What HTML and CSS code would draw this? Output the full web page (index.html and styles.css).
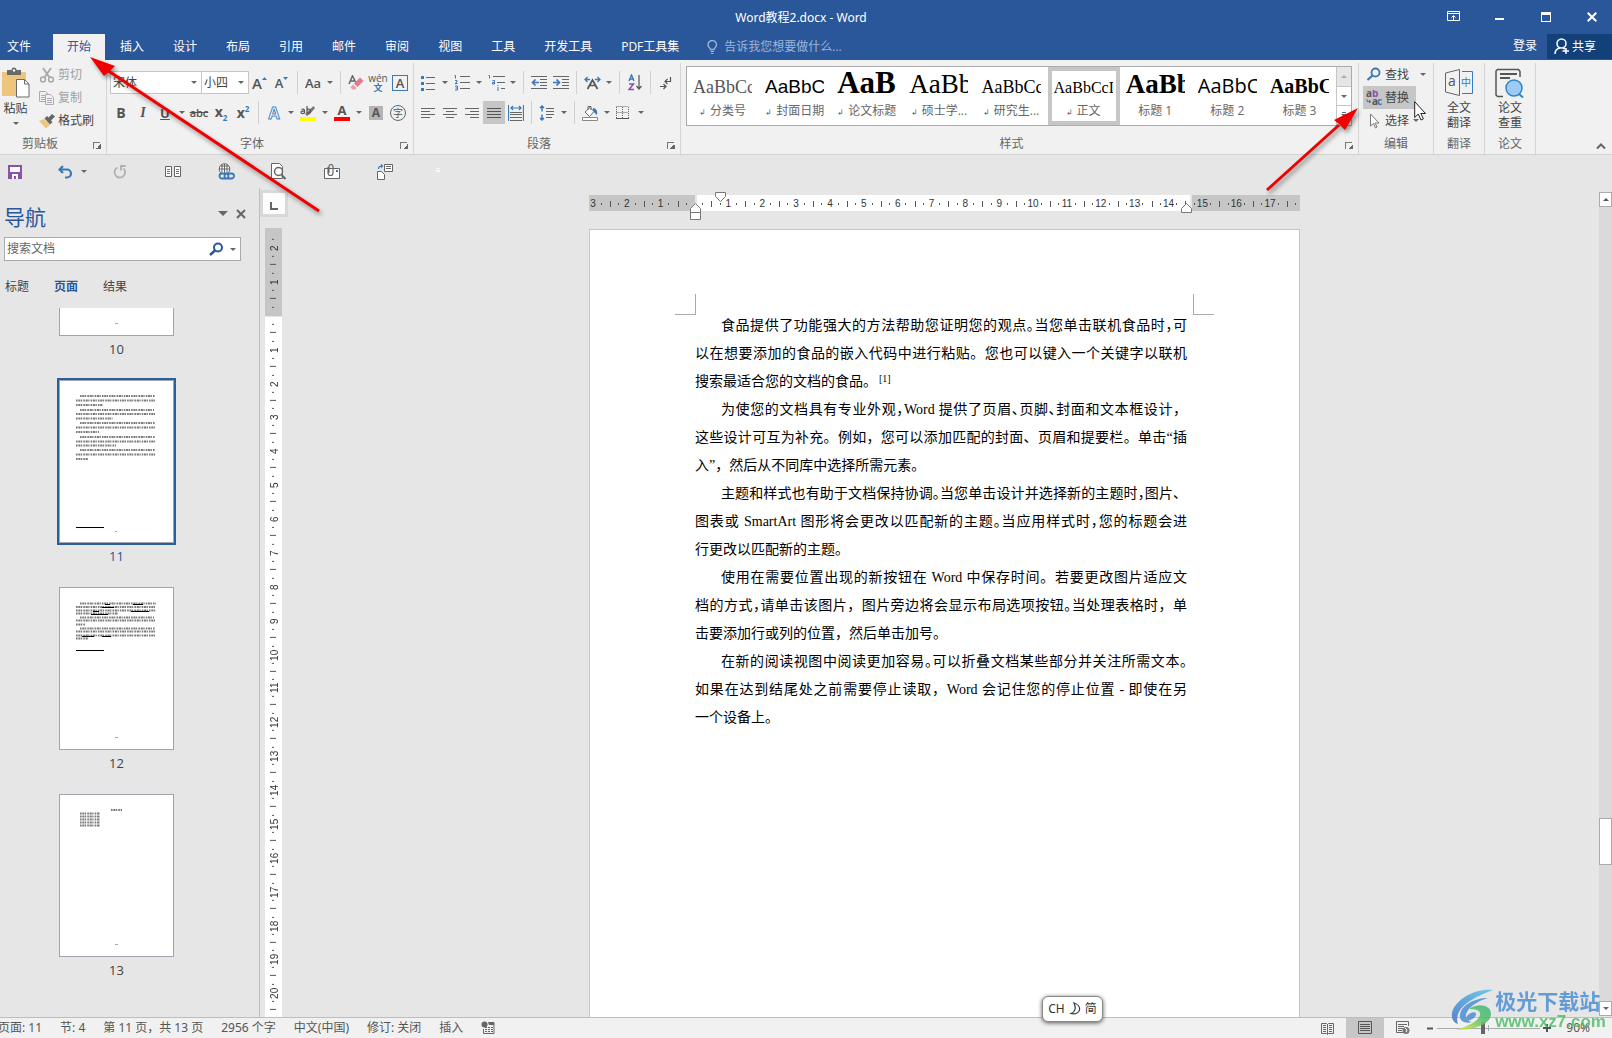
FILE: index.html
```html
<!DOCTYPE html>
<html lang="zh-CN">
<head>
<meta charset="utf-8">
<title>Word教程2.docx - Word</title>
<link rel="stylesheet" href="styles.css">
</head>
<body>
<header class="titlebar">
  <h1 class="doc-title">Word教程2.docx - Word</h1>
  <div class="window-buttons">
    <button aria-label="功能区显示选项"><svg width="14" height="11"><path d="M.5.5h12v9H.5zM.5 2.5h12M6.500 9V5M4.500 6.500l2-2 2 2" fill="none" stroke="#fff"/></svg></button>
    <button aria-label="最小化"><svg width="10" height="12"><path d="M0 7h9v2H0z" fill="#fff"/></svg></button>
    <button aria-label="最大化"><svg width="10" height="10"><path d="M0 0h10v10H0zM1 3v6h8V3z" fill="#fff" fill-rule="evenodd"/></svg></button>
    <button aria-label="关闭"><svg width="10" height="10"><path d="M.7.7l8.600 8.600M9.300.7L.7 9.300" stroke="#fff" stroke-width="2"/></svg></button>
  </div>
</header>
<nav class="tabs">
  <button class="tab tab-file">文件</button>
  <button class="tab active">开始</button>
  <button class="tab">插入</button>
  <button class="tab">设计</button>
  <button class="tab">布局</button>
  <button class="tab">引用</button>
  <button class="tab">邮件</button>
  <button class="tab">审阅</button>
  <button class="tab">视图</button>
  <button class="tab">工具</button>
  <button class="tab">开发工具</button>
  <button class="tab">PDF工具集</button>
  <button class="tell-me"><svg width="12" height="15"><path d="M3.500 9.500C3.500 8 1 7.500 1 4.800a4.200 4.200 0 0 1 8.500 0C9.500 7.500 7 8 7 9.500z" fill="none" stroke="#9fb6d8" stroke-width="1.400"/><path d="M3.500 11h3.500v1H3.500zM4 13h2.500v1H4z" fill="#9fb6d8"/></svg>告诉我您想要做什么...</button>
  <span class="grow"></span>
  <a class="sign-in" href="#">登录</a>
  <button class="share"><svg width="16" height="17"><circle cx="7.500" cy="5.500" r="4.500" fill="none" stroke="#fff" stroke-width="1.500"/><path d="M1 16c0-3 2-5.500 5-6M9 10l2 1M8.500 13h6.500M12 10v6" fill="none" stroke="#fff" stroke-width="1.500"/></svg>共享</button>
</nav>

<section class="ribbon" aria-label="功能区">
  <div class="group group-clip">
    <div class="content">
      <button class="big paste">
        <svg width="30" height="32"><path d="M1 5h24v24H1z" fill="#eec57c"/><path d="M6 3h4.500a2.500 2.500 0 0 1 5 0H20v5H6z" fill="#6a6a6a"/><circle cx="13" cy="3.500" r="1.200" fill="#fff"/><path d="M15.500 12.500h8l4.500 4.500v13H15.500z" fill="#fff" stroke="#6a6a6a"/><path d="M23.500 12.500V17H28" fill="none" stroke="#6a6a6a"/></svg>
        <span>粘贴</span><i class="caret"></i>
      </button>
      <div class="stack">
        <button class="cmd off"><svg width="16" height="16"><path d="M4 1l6.500 9.500M12 1L5.500 10.500" stroke="#a8a8a8" stroke-width="1.800"/><circle cx="4" cy="12.500" r="2.400" fill="none" stroke="#a8a8a8" stroke-width="1.500"/><circle cx="12" cy="12.500" r="2.400" fill="none" stroke="#a8a8a8" stroke-width="1.500"/></svg>剪切</button>
        <button class="cmd off"><svg width="16" height="16"><path d="M.5 1.500h6l3 3v7h-9zM2 5.500h4M2 7.500h4M2 9.500h4" fill="none" stroke="#b0a8b4"/><path d="M6.500 4.500h5l3 3v7h-8z" fill="#f1f1f1" stroke="#b0a8b4"/><path d="M8 8.500h5M8 10.500h5M8 12.500h5" stroke="#b0a8b4"/></svg>复制</button>
        <button class="cmd"><svg width="16" height="16"><path d="M0 8l5-2 6 6-4 3.500z" fill="#eec57c"/><path d="M5.500 5.500L8 3l1.500 1.500L13 1l3 2.500-4 4L13.500 9 11 11.500z" fill="#666"/></svg>格式刷</button>
      </div>
    </div>
    <div class="caption"><span>剪贴板</span><button class="launcher" aria-label="剪贴板设置"></button></div>
  </div>

  <div class="group group-font">
    <div class="content rows">
      <div class="row">
        <label class="combo combo-font"><select aria-label="字体"><option>宋体</option></select><i class="caret"></i></label><label class="combo combo-size"><select aria-label="字号"><option>小四</option></select><i class="caret"></i></label>
        <button class="ib" aria-label="增大字号"><span class="grow-a">A</span><svg width="6" height="14"><path d="M0 4l2.500-3L5 4z" fill="#3b78b8"/></svg></button>
        <button class="ib" aria-label="缩小字号"><span class="grow-a small">A</span><svg width="6" height="14"><path d="M0 1l2.500 3L5 1z" fill="#3b78b8"/></svg></button>
        <i class="sep"></i>
        <button class="ib dd" aria-label="更改大小写"><span class="glyph-aa">Aa</span><i class="caret"></i></button>
        <i class="sep"></i>
        <button class="ib" aria-label="清除格式"><svg width="16" height="16"><path d="M1 9L4.500.8 7.500 7M2.500 6h4" fill="none" stroke="#666" stroke-width="1.500"/><path d="M6 8.500l6-6 3.500 3.500-6 6z" fill="#e8788c"/><path d="M5 9.500l3.500 3.500-1.500 1.500H4.500l-2-2z" fill="#ee9aa8"/></svg></button>
        <button class="ib wen" aria-label="拼音指南"><span>wén</span><b>文</b></button>
        <button class="ib" aria-label="字符边框"><span class="boxed">A</span></button>
      </div>
      <div class="row">
        <button class="ib" aria-label="加粗"><b>B</b></button>
        <button class="ib" aria-label="倾斜"><span class="it">I</span></button>
        <button class="ib dd" aria-label="下划线"><span class="ul">U</span><i class="caret"></i></button>
        <button class="ib" aria-label="删除线"><s class="strike">abc</s></button>
        <button class="ib" aria-label="下标"><b>x<sub>2</sub></b></button>
        <button class="ib" aria-label="上标"><b>x<sup>2</sup></b></button>
        <i class="sep"></i>
        <button class="ib dd" aria-label="文本效果"><span class="effect">A</span><i class="caret"></i></button>
        <button class="ib dd" aria-label="突出显示"><svg width="16" height="16"><path d="M5 9l2 2 3-2 5-6-1.500-2z" fill="#777"/><path d="M0 12h16v4H0z" fill="#ff0"/><path d="M1.500 4.500c2-1 3 0 3 1V8c-2 1-3.500.5-3.500-.8s2-1.200 3.500-1M7 1v6.500c2 1 3.500 0 3.500-1.500S9 3.500 7 4.500" fill="none" stroke="#555" stroke-width="1.200"/></svg><i class="caret"></i></button>
        <button class="ib dd" aria-label="字体颜色"><span class="red-a">A</span><i class="caret"></i></button>
        <button class="ib" aria-label="字符底纹"><span class="shade">A</span></button>
        <button class="ib" aria-label="带圈字符"><span class="circled">字</span></button>
      </div>
    </div>
    <div class="caption"><span>字体</span><button class="launcher" aria-label="字体设置"></button></div>
  </div>

  <div class="group group-para">
    <div class="content rows">
      <div class="row">
        <button class="ib dd" aria-label="项目符号"><svg width="16" height="16"><path d="M6 2.500h9M6 8.500h9M6 14.500h9" stroke="#666"/><path d="M1 1h3v3H1zM1 7h3v3H1zM1 13h3v3H1z" fill="#3b78b8"/></svg><i class="caret"></i></button>
        <button class="ib dd" aria-label="编号"><svg width="16" height="17"><path d="M6 2.500h10M6 8.500h10M6 14.500h10" stroke="#666"/><path d="M.5 1.500h1V4.500M1 6.500h2v1.500l-2 1.500h2.500M1 12h2.500v4H1M1.500 14H3" fill="none" stroke="#3b78b8"/></svg><i class="caret"></i></button>
        <button class="ib dd" aria-label="多级列表"><svg width="17" height="17"><path d="M5 2.500h12M9 8.500h8M13 14.500h4" stroke="#666"/><path d="M.5 1.500h1V4.500M4.500 6.500h2V10h-2V8.500h2M10 11v1M10 13v4" fill="none" stroke="#3b78b8"/></svg><i class="caret"></i></button>
        <i class="sep"></i>
        <button class="ib" aria-label="减少缩进"><svg width="16" height="13"><path d="M0 .5h16M9 3.500h7M9 6.500h7M9 9.500h7M0 12.500h16" stroke="#666"/><path d="M8 6.500H2M4.500 3.500l-3 3 3 3" fill="none" stroke="#3b78b8" stroke-width="1.700"/></svg></button>
        <button class="ib" aria-label="增加缩进"><svg width="16" height="13"><path d="M0 .5h16M9 3.500h7M9 6.500h7M9 9.500h7M0 12.500h16" stroke="#666"/><path d="M0 6.500h6M3.500 3.500l3 3-3 3" fill="none" stroke="#3b78b8" stroke-width="1.700"/></svg></button>
        <i class="sep"></i>
        <button class="ib dd" aria-label="中文版式"><svg width="17" height="14"><path d="M3.500 13L8.500 4l5 9M5.500 9.500h6" fill="none" stroke="#555" stroke-width="1.700"/><path d="M6 3.500H1M3.500 1L1 3.500 3.500 6M11 3.500h5M13.500 1L16 3.500 13.500 6" fill="none" stroke="#3b78b8" stroke-width="1.300"/></svg><i class="caret"></i></button>
        <i class="sep"></i>
        <button class="ib" aria-label="排序"><svg width="15" height="17"><path d="M1 7l2.500-6L6 7M2 5h3" fill="none" stroke="#3b78b8" stroke-width="1.400"/><path d="M1 10h4.500L1 15.500h5" fill="none" stroke="#8a4fae" stroke-width="1.500"/><path d="M11 1v14M8.500 12l2.500 3 2.500-3" fill="none" stroke="#555" stroke-width="1.200"/></svg></button>
        <i class="sep"></i>
        <button class="ib" aria-label="显示编辑标记"><svg width="12" height="14"><path d="M10.500 1v4.500H5M7.500 3L5 5.500 7.500 8M0 10.500h6M3.500 8L6 10.500 3.500 13" fill="none" stroke="#555" stroke-width="1.200"/></svg></button>
      </div>
      <div class="row">
        <button class="ib" aria-label="左对齐"><svg width="14" height="12"><path d="M0 1.500h14M0 4.500h9M0 7.500h14M0 10.500h9" stroke="#666"/></svg></button>
        <button class="ib" aria-label="居中"><svg width="14" height="12"><path d="M0 1.500h14M3 4.500h8M0 7.500h14M3 10.500h8" stroke="#666"/></svg></button>
        <button class="ib" aria-label="右对齐"><svg width="14" height="12"><path d="M0 1.500h14M5 4.500h9M0 7.500h14M5 10.500h9" stroke="#666"/></svg></button>
        <button class="ib on" aria-label="两端对齐"><svg width="14" height="12"><path d="M0 1.500h14M0 4.500h14M0 7.500h14M0 10.500h14" stroke="#555"/></svg></button>
        <button class="ib" aria-label="分散对齐"><svg width="16" height="16"><path d="M.5 0v16M15.500 0v16M3 3h10M5 1L3 3l2 2M11 1l2 2-2 2" fill="none" stroke="#3b78b8" stroke-width="1.200"/><path d="M2 7.500h12M2 9.500h12M2 12.500h12M2 15.500h12" stroke="#666"/></svg></button>
        <i class="sep"></i>
        <button class="ib dd" aria-label="行距"><svg width="16" height="16"><path d="M3 1v5.500M1 3l2-2 2 2M3 9.500V15M1 13l2 2 2-2" fill="none" stroke="#3b78b8" stroke-width="1.500"/><path d="M7 3.500h8M7 6.500h8M7 9.500h8M7 12.500h6" stroke="#666"/></svg><i class="caret"></i></button>
        <i class="sep"></i>
        <button class="ib dd" aria-label="底纹"><svg width="17" height="16"><path d="M3 7l5-4.500 4 4-4.500 5z" fill="#fff" stroke="#666"/><path d="M6 5V1.500h3V5" fill="none" stroke="#666"/><path d="M11 3c3 0 5 3 4 7-2-1-2.500-3-4-4z" fill="#3b78b8"/><path d="M.5 12.500h15v3H.5z" fill="#fff" stroke="#888"/></svg><i class="caret"></i></button>
        <button class="ib dd" aria-label="边框"><svg width="14" height="14"><path d="M.5.500h12M.5 6.500h12M.5 1v12M6.500 1v12M12.500 1v12" fill="none" stroke="#666" stroke-dasharray="1 1"/><path d="M0 12.500h13" stroke="#555"/></svg><i class="caret"></i></button>
      </div>
    </div>
    <div class="caption"><span>段落</span><button class="launcher" aria-label="段落设置"></button></div>
  </div>

  <div class="group group-styles">
    <div class="content">
      <div class="gallery">
        <button class="style"><span class="sample s1">AaBbCc</span><span class="style-name"><i class="ret">↲</i>分类号</span></button>
        <button class="style"><span class="sample s2">AaBbCc</span><span class="style-name"><i class="ret">↲</i>封面日期</span></button>
        <button class="style"><span class="sample s3">AaBb</span><span class="style-name"><i class="ret">↲</i>论文标题</span></button>
        <button class="style"><span class="sample s4">AaBb</span><span class="style-name"><i class="ret">↲</i>硕士学...</span></button>
        <button class="style"><span class="sample s5">AaBbCc</span><span class="style-name"><i class="ret">↲</i>研究生...</span></button>
        <button class="style selected"><span class="sample s6">AaBbCcD</span><span class="style-name"><i class="ret">↲</i>正文</span></button>
        <button class="style"><span class="sample s7">AaBb</span><span class="style-name">标题 1</span></button>
        <button class="style"><span class="sample s8">AaBbC</span><span class="style-name">标题 2</span></button>
        <button class="style"><span class="sample s9">AaBbC</span><span class="style-name">标题 3</span></button>
        <div class="gallery-scroll">
          <button class="disabled" aria-label="上一行"><i class="caret up"></i></button>
          <button aria-label="下一行"><i class="caret"></i></button>
          <button aria-label="更多样式"><i class="more"></i></button>
        </div>
      </div>
    </div>
    <div class="caption"><span>样式</span><button class="launcher" aria-label="样式设置"></button></div>
  </div>

  <div class="group group-edit">
    <div class="content">
      <div class="stack">
        <button class="cmd"><svg width="16" height="16"><circle cx="9.500" cy="5.500" r="4" fill="none" stroke="#3b78b8" stroke-width="1.800"/><path d="M6.500 8.500L1.500 13" stroke="#3b78b8" stroke-width="2.200"/></svg>查找<i class="caret far"></i></button>
        <button class="cmd on"><svg width="16" height="16" class="ab-icon"><text x="0" y="7" fill="#555">a</text><text x="6" y="7" fill="#8a4fae">b</text><text x="6" y="15" fill="#555">a</text><text x="11" y="15" fill="#3b78b8">c</text><path d="M1 9v2.500h3M3 10l2 1.500L3 13" fill="none" stroke="#3b78b8"/></svg>替换</button>
        <button class="cmd"><svg width="16" height="16"><path d="M4.500 1v12l3-2.500 2 4.500 1.500-1-2-4h4z" fill="#fff" stroke="#777"/></svg>选择<i class="caret"></i></button>
      </div>
    </div>
    <div class="caption"><span>编辑</span></div>
  </div>

  <div class="group group-narrow">
    <div class="content">
      <button class="big">
        <svg width="28" height="30"><path d="M.5 5L14.500 1.500v26L.5 24z" fill="none" stroke="#666"/><path d="M17 3.500h10.500v22H17" fill="none" stroke="#3b78c8"/><text x="3" y="18" font-size="14" fill="#555">a</text><text x="16" y="18" font-size="10" fill="#3b78c8">中</text></svg>
        <span>全文<br>翻译</span>
      </button>
    </div>
    <div class="caption"><span>翻译</span></div>
  </div>
  <div class="group group-narrow">
    <div class="content">
      <button class="big">
        <svg width="30" height="30"><path d="M25 9V3.500L23.500 1.500H2.500L1 3v24l1.500 1.500H8" fill="none" stroke="#555" stroke-width="1.500"/><path d="M5 6h17M5 10h10" stroke="#555" stroke-width="1.800"/><circle cx="19" cy="20" r="8" fill="#9ccbf5" stroke="#2f86c0" stroke-width="1.500"/><path d="M24 26l4 3.500" stroke="#2f86c0" stroke-width="2"/></svg>
        <span>论文<br>查重</span>
      </button>
    </div>
    <div class="caption"><span>论文</span></div>
  </div>
  <div class="ribbon-end"><button aria-label="折叠功能区"><svg width="10" height="7"><path d="M1 5.500l4-4 4 4" fill="none" stroke="#666" stroke-width="2"/></svg></button></div>
</section>

<div class="qat">
  <button class="q q-save" aria-label="保存"><svg width="14" height="14"><path d="M0 0h14v14H0z" fill="#8a52a8"/><path d="M2 2h10v5H2zM4 9h6v5H8v-3H6v3H4z" fill="#fff"/></svg></button>
  <button class="q q-undo" aria-label="撤消"><svg width="16" height="14"><path d="M5 1L1.500 4.500 5 8M2 4.500h7a4 4 0 0 1 0 8H7" fill="none" stroke="#3b78b8" stroke-width="2.200"/></svg><i class="caret"></i></button>
  <button class="q" aria-label="重复"><svg width="14" height="14"><path d="M4.500 2.500a5.300 5.300 0 1 0 6 1" fill="none" stroke="#b0b0b0" stroke-width="1.800"/><path d="M8 0v5.500M7.500 1h5" fill="none" stroke="#b0b0b0" stroke-width="1.800"/></svg></button>
  <button class="q" aria-label="多页"><svg width="16" height="12"><path d="M.5.5h6v10h-6zM9.500.5h6v10h-6z" fill="#fff" stroke="#666"/><path d="M2 3.500h3M2 5.500h3M2 7.500h3M11 3.500h3M11 5.500h3M11 7.500h3" stroke="#777"/></svg></button>
  <button class="q" aria-label="超链接"><svg width="17" height="17"><circle cx="6.500" cy="6" r="5.300" fill="#fff" stroke="#666"/><path d="M1 6h11M6.500 1v10M2.500 3h8M4 1.500v8M9 1.500v8" fill="none" stroke="#666"/><path d="M3 10.500h5a2 2 0 0 1 0 5H4a2 2 0 0 1 0-5zM9 10.500h4.500a2 2 0 0 1 0 5H9a2 2 0 0 1 0-5z" fill="#e6e6e6" stroke="#3b78b8" stroke-width="1.800"/></svg></button>
  <button class="q" aria-label="打印预览"><svg width="16" height="17"><path d="M.5.500h8l3 3v12H.5z" fill="#fff" stroke="#666"/><circle cx="7.500" cy="8.500" r="4" fill="#fff" stroke="#666" stroke-width="1.500"/><path d="M10.500 12l4 4" stroke="#666" stroke-width="2.200"/></svg></button>
  <button class="q" aria-label="附件"><svg width="17" height="16"><path d="M.5 4.500h15v10H.5z" fill="#fff" stroke="#666"/><path d="M12 6h2v2h-2z" fill="#3b78b8"/><path d="M4 3v6a2.500 2.500 0 0 0 5 0V2.500a2 2 0 0 0-4 0V9" fill="none" stroke="#666" stroke-width="1.200"/></svg></button>
  <button class="q" aria-label="转换"><svg width="17" height="16"><path d="M7.500.5h8v7h-8zM9 2.500h5M9 4.500h5" fill="#fff" stroke="#666"/><path d="M.5 7.500h4l3 3v5h-7z" fill="#fff" stroke="#666"/><path d="M1.500 5c0-2 1-3 4-3M4 .5L5.500 2 4 3.500" fill="none" stroke="#3b78b8" stroke-width="1.200"/></svg></button>
  <button class="q" aria-label="自定义快速访问工具栏"><i class="more pale"></i></button>
</div>

<main class="workspace">
  <aside class="nav-pane">
    <div class="nav-head"><h2>导航</h2><button aria-label="选项"><i class="caret wide"></i></button><button aria-label="关闭"><svg width="10" height="10"><path d="M1 1l8 8M9 1L1 9" stroke="#666" stroke-width="2"/></svg></button></div>
    <div class="search"><input type="text" placeholder="搜索文档" aria-label="搜索文档"><button aria-label="搜索"><svg width="15" height="14"><circle cx="9" cy="5.500" r="4" fill="none" stroke="#2a579a" stroke-width="2"/><path d="M6 8.500L1 13" stroke="#2a579a" stroke-width="2.500"/></svg></button><i class="caret"></i></div>
    <div class="nav-tabs"><button>标题</button><button class="current">页面</button><button>结果</button></div>
    <ol class="thumbs">
      <li><div class="thumb cut"><svg viewBox="0 0 113 27"><path d="M55 15.500h3" stroke="#aaa"/></svg></div><span>10</span></li>
      <li class="current"><div class="thumb"><svg viewBox="0 0 113 161">
        <g class="lines"><path d="M20 15h75M16 19.500h79M16 24h27M20 29h74M16 33h79M16 37.500h37M20 42h75M16 46.500h79M16 51h23M20 56h75M16 60.500h79M16 64.500h40M20 69h75M16 73.500h79M16 78h12"/></g><path d="M16 146.500h28" stroke="#000"/><path d="M55 150.500h2" stroke="#aaa"/></svg></div><span>11</span></li>
      <li><div class="thumb"><svg viewBox="0 0 113 161">
        <g class="lines"><path d="M20 15.500h76M16 19h79M16 22.500h80M16 25.500h42M20 29.500h74M16 32.500h79M16 36.500h9M20 40.500h75M16 43.500h79M16 47.500h79M16 50.500h12"/></g><path d="M45 16.500h5M73 16.500h10M42 19.500h12M33 23.500h6M71 23.500h18M31 26.500h17M22 48.500h12M42 48.500h9M16 62.500h28" stroke="#000"/><path d="M55 149.500h3" stroke="#aaa"/></svg></div><span>12</span></li>
      <li><div class="thumb"><svg viewBox="0 0 113 161">
        <g class="lines"><path d="M51 15h11M20 18.500h20M20 21.500h20M20 24.500h20M20 27.500h20M20 30.500h20"/></g><path d="M55 149.500h3" stroke="#aaa"/></svg></div><span>13</span></li>
    </ol>
  </aside>

  <div class="v-ruler-col">
    <button class="tab-stop" aria-label="制表符"><i></i></button>
    <div class="v-ruler"><div class="v-track"><i>2</i><i>1</i><i></i><i>1</i><i>2</i><i>3</i><i>4</i><i>5</i><i>6</i><i>7</i><i>8</i><i>9</i><i>10</i><i>11</i><i>12</i><i>13</i><i>14</i><i>15</i><i>16</i><i>17</i><i>18</i><i>19</i><i>20</i><i></i></div></div>
  </div>

  <div class="canvas">
    <div class="sheet-col">
      <div class="h-ruler">
        <div class="h-clip"><div class="h-track"><i>3</i><i>2</i><i>1</i><i></i><i>1</i><i>2</i><i>3</i><i>4</i><i>5</i><i>6</i><i>7</i><i>8</i><i>9</i><i>10</i><i>11</i><i>12</i><i>13</i><i>14</i><i>15</i><i>16</i><i>17</i><i></i></div></div>
        <svg class="marker first" width="11" height="11"><path d="M.5.500h10v4l-5 5-5-5z" fill="#fff" stroke="#777"/></svg>
        <svg class="marker hang" width="11" height="17"><path d="M.5 16.500v-11l5-5 5 5v11zM.5 9.500h10" fill="#fff" stroke="#777"/></svg>
        <svg class="marker right" width="11" height="11"><path d="M.5 9.500v-4l5-5 5 5v4z" fill="#fff" stroke="#777"/></svg>
      </div>
      <article class="page">
        <div class="crop-row"><i class="crop-left"></i><i class="crop-right"></i></div>
        <div class="body-text">
          <p><span class="ln">食品提供了功能强大的方法帮助您证明您的观点<span class="tight">。</span>当您单击联机食品时<span class="tight">，</span>可</span><span class="ln">以在想要添加的食品的嵌入代码中进行粘贴。您也可以键入一个关键字以联机</span><span class="end">搜索最适合您的文档的食品。<sup>[1]</sup></span></p>
          <p><span class="ln">为使您的文档具有专业外观<span class="tight">，</span>Word 提供了页眉<span class="tight">、</span>页脚<span class="tight">、</span>封面和文本框设计，</span><span class="ln">这些设计可互为补充。例如，您可以添加匹配的封面、页眉和提要栏。单击“插</span><span class="end">入”，然后从不同库中选择所需元素。</span></p>
          <p><span class="ln">主题和样式也有助于文档保持协调<span class="tight">。</span>当您单击设计并选择新的主题时<span class="tight">，</span>图片、</span><span class="ln">图表或 SmartArt 图形将会更改以匹配新的主题<span class="tight">。</span>当应用样式时<span class="tight">，</span>您的标题会进</span><span class="end">行更改以匹配新的主题。</span></p>
          <p><span class="ln">使用在需要位置出现的新按钮在 Word 中保存时间。若要更改图片适应文</span><span class="ln">档的方式<span class="tight">，</span>请单击该图片，图片旁边将会显示布局选项按钮<span class="tight">。</span>当处理表格时，单</span><span class="end">击要添加行或列的位置，然后单击加号。</span></p>
          <p><span class="ln">在新的阅读视图中阅读更加容易<span class="tight">。</span>可以折叠文档某些部分并关注所需文本<span class="tight">。</span></span><span class="ln">如果在达到结尾处之前需要停止读取，Word 会记住您的停止位置 - 即使在另</span><span class="end">一个设备上。</span></p>
        </div>
      </article>
    </div>
  </div>

  <div class="scrollbar">
    <button aria-label="向上滚动"><i class="caret up"></i></button>
    <div class="rail"><div class="handle"></div></div>
    <button aria-label="向下滚动"><i class="caret"></i></button>
  </div>
</main>

<footer class="status">
  <span>页面: 11</span><span>节: 4</span><span>第 11 页，共 13 页</span><span>2956 个字</span><span>中文(中国)</span><span>修订: 关闭</span><span>插入</span>
  <svg width="14" height="14"><circle cx="3.500" cy="3.500" r="3" fill="#666"/><path d="M8 1.500h5v11H2.500V8" fill="none" stroke="#666"/><path d="M7 1h6v3H8z" fill="#666"/><path d="M4 6.500h8M4 8.500h8M4 10.500h8" stroke="#666" stroke-dasharray="2 1"/></svg>
  <span class="grow"></span>
  <div class="views">
    <button aria-label="阅读视图"><svg width="13" height="13"><path d="M.5 1.500h5l1 1 1-1h5v10h-5l-1 1-1-1h-5zM6.500 2v10M2 3.500h3M2 5.500h3M2 7.500h3M2 9.500h3M8 3.500h3M8 5.500h3M8 7.500h3M8 9.500h3" fill="none" stroke="#666"/></svg></button>
    <button class="on" aria-label="页面视图"><svg width="14" height="14"><path d="M.5.500h13v12H.5zM2 3.500h10M2 5.500h10M2 7.500h10M2 9.500h10" fill="none" stroke="#555"/></svg></button>
    <button aria-label="Web 版式"><svg width="14" height="14"><path d="M7 11.500H.5V.5h12V5M2 3.500h9M2 5.500h6M2 7.500h5M2 9.500h4" fill="none" stroke="#666"/><circle cx="10" cy="9.500" r="3.500" fill="#777"/><path d="M9 7l2 2-1 2" fill="none" stroke="#fff"/></svg></button>
  </div>
  <div class="zoom">
    <button aria-label="缩小"><svg width="7" height="7"><path d="M0 3.500h6" stroke="#555" stroke-width="2"/></svg></button>
    <input type="range" min="10" max="200" value="93" aria-label="缩放比例">
    <button aria-label="放大"><svg width="8" height="8"><path d="M0 4h8M4 0v8" stroke="#555" stroke-width="2"/></svg></button>
    <span class="pct">90%</span>
  </div>
</footer>

<div class="ime">CH<svg width="12" height="14"><path d="M5 1c4 1 6 4 5.500 7S6 12.500 2 11.500C6 10 7.500 6 5 1z" fill="none" stroke="#333" stroke-width="1.200"/></svg>简</div>

<div class="watermark">
  <svg width="44" height="42"><defs><linearGradient id="wa" x1="0" y1="1" x2="1" y2="0"><stop offset="0" stop-color="#3f74c4"/><stop offset="1" stop-color="#59c6ee"/></linearGradient><linearGradient id="wb" x1="0" y1="1" x2="1" y2="0"><stop offset="0" stop-color="#e6ea3a"/><stop offset=".6" stop-color="#52bd6c"/><stop offset="1" stop-color="#3fb57c"/></linearGradient></defs>
  <path d="M42 1C25-1 4 10 1 24c-1 6 2 10 6 11-3-8 2-17 12-23C27 7 34 4 42 1z" fill="url(#wa)"/><path d="M37 9C22 9 10 17 9 26c-1 7 6 9 12 7-5-1-8-5-5-10 3-6 11-11 21-14z" fill="#4d8fd4"/><path d="M18 20c8-6 22-5 22 5 0 9-14 16-35 16 12-4 23-9 24-15 1-5-5-6-11-6z" fill="url(#wb)"/><path d="M16 27c3-4 9-5 9-2 0 4-6 7-11 7z" fill="#4d8fd4"/></svg>
  <div><strong>极光下载站</strong><span>www.xz7.com</span></div>
</div>

<svg class="callout callout-left" width="340" height="230"><g fill="#f00000"><path d="M319 211L107 70" stroke="#f00000" stroke-width="3"/><path d="M90 57l25 9-5 5-6 5z"/></g></svg>
<svg class="callout callout-right" width="180" height="120"><path d="M15 110L87 45" stroke="#f00000" stroke-width="3"/><path d="M106 28L93 50l-6-6-5-4z" fill="#f00000"/></svg>
<svg class="pointer" width="14" height="20"><path d="M.7.700v15.800l3.500-3.500 2.800 6 2.400-1.200-2.600-5.300h4.700z" fill="#fff" stroke="#222"/></svg>
</body>
</html>
```
FILE: styles.css
```css
* { box-sizing: border-box; }

body {
  margin: 0;
  height: 100vh;
  min-height: 640px;
  display: flex;
  flex-direction: column;
  overflow: hidden;
  position: relative;
  background: #e6e6e6;
  color: #444;
  font: 12px/16px "Open Sans", "Noto Sans CJK SC", sans-serif;
}

button, input, select {
  font: inherit;
  color: inherit;
  border: 0;
  padding: 0;
  margin: 0;
  background: none;
  border-radius: 0;
}

svg { display: block; flex: none; }
i { font-style: normal; }
.grow { flex: 1; }

.caret {
  flex: none;
  border: 3px solid transparent;
  border-top-color: #666;
  border-bottom-width: 0;
}
.caret.up { border-top-width: 0; border-bottom: 3px solid #aaa; }
.caret.wide { border-width: 5px 5px 0; }

/* Title bar and tabs */
.titlebar { display: flex; height: 34px; background: #2a579a; color: #fff; flex: none; }
.doc-title { flex: 1; margin: 0; padding-left: 168px; font: 12px/35px "Noto Sans", "Noto Sans CJK SC", sans-serif; text-align: center; }
.window-buttons { display: flex; gap: 6px; }
.window-buttons button { width: 40px; height: 33px; display: flex; align-items: center; justify-content: center; }

.tabs { display: flex; gap: 1px; height: 26px; background: #2a579a; color: #fff; flex: none; }
.tab { padding: 0 14px; line-height: 22px; white-space: nowrap; }
.tab-file { padding: 0 21px 0 7px; }
.tab.active { background: #f1f1f1; color: #2a579a; }
.tell-me { display: flex; align-items: center; gap: 5px; margin-left: 13px; color: #9fb6d8; }
.sign-in { color: #fff; text-decoration: none; line-height: 24px; margin-right: 9px; }
.share { display: flex; align-items: center; gap: 2px; width: 65px; height: 25px; padding-left: 7px; background: #124078; }

/* Ribbon */
.ribbon { display: flex; height: 95px; padding-top: 3px; background: #f1f1f1; border-bottom: 1px solid #d2d2d2; flex: none; }
.group { display: flex; flex-direction: column; border-right: 1px solid #d4d4d4; flex: none; }
.content { display: flex; height: 70px; flex: none; }
.caption { display: flex; align-items: center; height: 21px; color: #666; }
.caption span { flex: 1; text-align: center; }
.launcher { width: 16px; height: 10px; background: linear-gradient(#777, #777) 3px 3px / 7px 1px no-repeat, linear-gradient(#777, #777) 3px 3px / 1px 7px no-repeat, linear-gradient(135deg, transparent 50%, #666 50%) 6px 5px / 5px 5px no-repeat; }

.group-clip { width: 107px; }
.group-clip .caption span { padding-right: 10px; }
.group-font { width: 307px; }
.group-para { width: 267px; }
.group-styles { flex: 1; min-width: 400px; }
.group-edit { width: 75px; }
.group-narrow { width: 51px; }
.ribbon-end { width: 76px; display: flex; align-items: flex-end; justify-content: flex-end; padding: 0 6px 4px 0; flex: none; }

.big { display: flex; flex-direction: column; align-items: center; width: 50px; padding-top: 5px; line-height: 15px; }
.big svg { margin-bottom: 2px; }
.paste { width: 37px; padding: 4px 6px 0 0; }
.paste .caret { margin-top: 6px; }
.stack { display: flex; flex-direction: column; align-items: flex-start; }
.cmd { display: flex; align-items: center; gap: 3px; height: 23px; padding: 0 2px; white-space: nowrap; }
.cmd.off { color: #a0a0a0; }
.on { background: #c6c6c6; }
.group-edit .content { padding-left: 4px; }
.group-edit .cmd { padding-left: 3px; }
.group-edit .cmd.on { padding-right: 7px; }
.group-edit .cmd .caret { margin-left: 1px; }
.group-edit .cmd .far { margin-left: 8px; }
.ab-icon { font: bold 10px "Open Sans", sans-serif; }

.rows { flex-direction: column; padding: 8px 0 0 3px; gap: 7px; }
.row { display: flex; height: 23px; }
.sep { width: 1px; margin: 0 4px; background: #d0d0d0; }
.ib { display: flex; align-items: center; justify-content: center; width: 22px; height: 23px; color: #555; line-height: 16px; font-size: 14px; }
.ib.dd { width: 34px; justify-content: flex-start; padding-left: 3px; gap: 3px; }
.ib.dd > :first-child { min-width: 16px; }
.ib.dd .caret { margin-left: auto; margin-right: 3px; }
.ib.on { color: #444; }

.combo { display: flex; align-items: center; height: 23px; border: 1px solid #c6c6c6; background: #fff; padding: 0 4px 0 2px; }
.combo + .combo { border-left: 0; }
.combo select { flex: 1; min-width: 0; appearance: none; outline: 0; }
.combo-font { width: 92px; }
.combo-size { width: 47px; }

.grow-a { font-size: 15px; font-weight: 600; }
.grow-a.small { font-size: 13px; }
.glyph-aa { font-weight: 600; font-size: 13px; }
.wen { flex-direction: column; font-size: 10px; line-height: 10px; }
.wen b { color: #3b78b8; font-size: 9px; }
.boxed { width: 16px; height: 16px; border: 1px solid #3b78b8; text-align: center; line-height: 14px; font-weight: 600; font-size: 13px; }
.it { font: italic bold 14px/16px "Liberation Serif", serif; text-align: center; }
.ul { text-decoration: underline; font-weight: 700; text-align: center; font-size: 13px; }
.strike { font-size: 11px; font-weight: 600; }
.ib sub, .ib sup { font-size: 8px; line-height: 8px; color: #3b78b8; }
.effect { color: #fff; font-weight: 700; font-size: 16px; text-align: center; -webkit-text-stroke: 1px #4a8ac6; }
.red-a { border-bottom: 4px solid #f00; font-weight: 700; font-size: 13px; line-height: 13px; text-align: center; }
.shade { width: 14px; height: 14px; background: #b4b4b4; line-height: 14px; text-align: center; font-weight: 700; font-size: 12px; }
.circled { width: 16px; height: 16px; border: 1px solid #666; border-radius: 50%; font-size: 10px; line-height: 14px; text-align: center; }

/* Style gallery */
.group-styles .content { padding: 3px 6px 7px 5px; }
.gallery { flex: 1; display: flex; border: 1px solid #ababab; background: #fff; min-width: 0; }
.style { flex: 1 1 0; min-width: 0; height: 58px; padding: 0 7px 0 6px; overflow: hidden; display: flex; flex-direction: column; text-align: left; }
.style.selected { border: 4px solid #c6c6c6; padding: 0 3px 0 2px; }
.style.selected .sample { margin-top: -4px; }
.sample { width: 100%; height: 35px; line-height: 1px; overflow: hidden; white-space: nowrap; color: #000; font-family: "Liberation Serif", serif; }
.sample::before { content: ""; display: inline-block; height: 26px; }
.style-name { align-self: center; line-height: 18px; white-space: nowrap; color: #666; }
.ret { font-size: 8px; margin-right: 4px; }
.s1 { font-size: 18px; color: #555; }
.s2 { font-size: 19px; font-family: "Liberation Sans", sans-serif; }
.s3 { font-size: 31px; font-weight: 700; }
.s4 { font-size: 27px; }
.s5 { font-size: 18px; }
.s6 { font-size: 16px; }
.s7 { font-size: 27px; font-weight: 700; }
.s8 { font-size: 20px; font-family: "Open Sans", sans-serif; }
.s9 { font-size: 20px; font-weight: 700; }
.gallery-scroll { width: 15px; display: flex; flex-direction: column; border-left: 1px solid #c6c6c6; }
.gallery-scroll button { flex: 1; display: flex; align-items: center; justify-content: center; border-top: 1px solid #c6c6c6; }
.gallery-scroll .disabled { background: #e6e6e6; border-top: 0; }
.more { border: 3px solid transparent; border-top-color: #666; border-bottom: 0; box-shadow: 0 -3px 0 -1px #666; }
.more.pale { border-top-color: #fafafa; box-shadow: 0 -3px 0 -1px #f4f4f4; }

/* Quick access toolbar */
.qat { display: flex; gap: 23px; height: 33px; flex: none; }
.q { width: 30px; display: flex; align-items: center; justify-content: center; }
.q-save { width: 29px; }
.q-undo { justify-content: flex-start; padding-left: 6px; gap: 7px; }

/* Workspace */
.workspace { flex: 1; display: flex; min-height: 0; }
.nav-pane { width: 260px; padding-top: 9px; border-right: 1px solid #bfbfbf; display: flex; flex-direction: column; flex: none; }
.nav-head { display: flex; align-items: center; height: 40px; padding: 0 13px 0 4px; gap: 8px; }
.nav-head h2 { flex: 1; margin: 0; font-size: 21px; line-height: 40px; font-weight: 400; color: #2a579a; }
.nav-head button { display: flex; align-items: center; height: 32px; margin-bottom: 7px; }
.search { display: flex; align-items: center; height: 24px; margin: 0 18px 0 4px; padding: 0 4px 0 2px; border: 1px solid #ababab; background: #fff; gap: 6px; }
.search input { flex: 1; min-width: 0; outline: 0; }
.search input::placeholder { color: #666; opacity: 1; }
.nav-tabs { display: flex; height: 52px; margin-bottom: -5px; }
.nav-tabs button { width: 49px; padding-left: 13px; text-align: left; line-height: 52px; }
.nav-tabs button:first-child { width: 41px; padding-left: 5px; }
.nav-tabs .current { color: #2a579a; font-weight: 700; }
.thumbs { list-style: none; margin: 0; padding: 0 0 0 59px; overflow: hidden; flex: 1; display: flex; flex-direction: column; gap: 22px; }
.thumbs li { width: 115px; flex: none; text-align: center; font-size: 13px; }
.thumbs span { display: block; margin-top: 4px; line-height: 18px; }
.thumb { height: 163px; border: 1px solid #a0a5ad; background: #fff; }
.thumb.cut { height: 28px; border-top: 0; }
.lines { stroke: #222; stroke-width: 2px; stroke-dasharray: 1.6 .7 2.2 .5 1.2 1.1; opacity: .6; }
.current .thumb { outline: 2px solid #2a6099; }
.thumbs .current { color: #2a579a; }

/* Rulers */
.v-ruler-col { width: 30px; flex: none; display: flex; flex-direction: column; align-items: flex-start; }
.tab-stop { width: 28px; height: 27px; margin: 2px 0 11px; background: #fcfcfc; border: 3px solid #d8d8d8; display: flex; align-items: flex-end; justify-content: center; padding-bottom: 4px; flex: none; }
.tab-stop i { width: 8px; height: 8px; border: solid #666; border-width: 0 0 2px 2px; }
.v-ruler { flex: 1; min-height: 0; width: 17px; margin-left: 5px; overflow: hidden; background: linear-gradient(#c6c6c6 88px, #e6e6e6 88px, #e6e6e6 89px, #fff 89px); }
.v-track { display: flex; flex-direction: column; height: 816px; padding-top: 3px; }
.v-track i, .h-track i { flex: 1; display: flex; align-items: center; justify-content: center; font: 10px/10px "Liberation Sans", sans-serif; color: #333; }
.v-track i { padding-right: 2px; writing-mode: vertical-rl; transform: rotate(180deg); background: linear-gradient(#555, #555) 50% 0 / 6px 1px no-repeat, linear-gradient(#555, #555) 50% 25% / 2px 1px no-repeat, linear-gradient(#555, #555) 50% 75% / 2px 1px no-repeat; }
.h-ruler { position: relative; flex: none; height: 16px; background: linear-gradient(90deg, #c6c6c6 106px, #e6e6e6 106px, #e6e6e6 108px, #fff 108px, #fff 601px, #e6e6e6 601px, #e6e6e6 603px, #c6c6c6 603px); }
.h-clip { overflow: hidden; height: 16px; }
.h-track { display: flex; width: 745px; height: 16px; margin-left: -13px; }
.h-track i { padding-top: 2px; background: linear-gradient(#555, #555) 0 60% / 1px 6px no-repeat, linear-gradient(#555, #555) 25% 60% / 1px 2px no-repeat, linear-gradient(#555, #555) 75% 60% / 1px 2px no-repeat; }
.marker { position: absolute; }
.marker.first { left: 126px; top: -3px; }
.marker.hang { left: 101px; top: 8px; }
.marker.right { left: 592px; top: 8px; }

/* Document */
.canvas { flex: 1; min-width: 0; overflow: hidden; display: flex; justify-content: center; }
.sheet-col { width: 711px; flex: none; padding-top: 7px; display: flex; flex-direction: column; }
.page { flex: 1; min-height: 0; overflow: hidden; margin-top: 18px; border: 1px solid #c6c6c6; border-bottom: 0; background: #fff; padding: 64px 85px 0; color: #000; }
.crop-row { display: flex; justify-content: space-between; }
.crop-row i { width: 21px; height: 21px; border: solid #aaa; border-width: 0 1px 1px 0; }
.crop-row .crop-right { border-width: 0 0 1px 1px; }
.body-text { padding: 0 27px 0 20px; margin-top: -3px; font: 14px/28px "Liberation Serif", "Noto Sans CJK SC", serif; }
.body-text p { margin: 0; text-indent: 26px; }
.body-text .ln, .body-text .end { display: block; white-space: nowrap; }
.body-text .ln { text-align: justify; text-align-last: justify; white-space: normal; height: 28px; }
.body-text .ln + .ln, .body-text .end { text-indent: 0; }
.body-text sup { font-size: 10px; line-height: 10px; margin-left: 2px; vertical-align: 4px; }
.tight { font-feature-settings: "halt"; }

.scrollbar { width: 13px; flex: none; display: flex; flex-direction: column; padding: 4px 0 1px; }
.scrollbar button { height: 15px; background: #fff; border: 1px solid #ababab; display: flex; align-items: center; justify-content: center; }
.scrollbar .caret.up { border-bottom-color: #555; }
.rail { flex: 1; background: #dadada; display: flex; flex-direction: column; justify-content: flex-end; }
.handle { height: 47px; margin-bottom: 136px; background: #fff; border: 1px solid #ababab; }

/* Status bar */
.status { display: flex; align-items: center; gap: 18px; height: 21px; margin-left: -2px; background: #f1f1f1; border-top: 1px solid #bdbdbd; white-space: nowrap; flex: none; color: #555; font-family: "Noto Sans", "Noto Sans CJK SC", sans-serif; }
.views { display: flex; align-self: stretch; }
.views button { width: 38px; display: flex; align-items: center; justify-content: center; }
.zoom { display: flex; align-items: center; gap: 3px; margin-left: -13px; padding-right: 22px; }
.zoom .pct { margin-left: 12px; }
.zoom input { width: 103px; height: 12px; appearance: none; background: linear-gradient(#aaa, #aaa) 50% 50% / 1px 6px no-repeat, linear-gradient(#aaa, #aaa) 0 50% / 100% 1px no-repeat; }
.zoom input::-webkit-slider-thumb { appearance: none; width: 4px; height: 12px; background: #666; }

/* Floating layers */
.ime { position: absolute; right: 509px; bottom: 16px; display: flex; align-items: center; justify-content: center; gap: 4px; width: 61px; height: 26px; border-radius: 6px; background: #fff; border: 1px solid #888; box-shadow: 0 1px 4px #555; color: #333; font-family: "Noto Sans", "Noto Sans CJK SC", sans-serif; }
.watermark { position: absolute; right: 6px; bottom: 7px; display: flex; opacity: .85; }
.watermark strong { display: block; font-size: 21px; line-height: 24px; color: #4d8fd4; font-weight: 700; }
.watermark span { display: block; font: bold 17px/18px "Liberation Sans", sans-serif; color: #52bd6c; }
.callout { position: absolute; pointer-events: none; filter: drop-shadow(2px 3px 2px #0006); }
.callout-left { left: 0; top: 0; }
.callout-right { right: 180px; top: 80px; }
.pointer { position: absolute; right: 184px; top: 101px; }
```
